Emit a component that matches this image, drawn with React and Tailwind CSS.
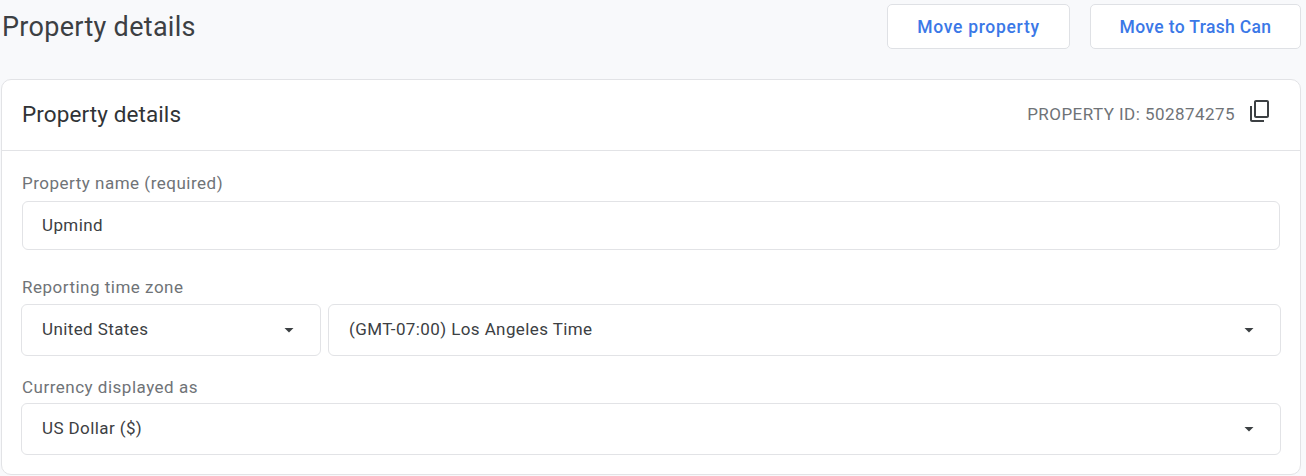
function Caret() {
  return (
    <svg width="10" height="5" viewBox="0 0 10 5" className="shrink-0">
      <path d="M0.5 0h9L5 4.500z" fill="#3c4043" />
    </svg>
  );
}

function Select({ text, className }) {
  return (
    <div className={`flex h-[52px] items-center justify-between rounded-[6px] border border-[#e2e3e6] bg-white pl-[20px] pr-[26px] text-[17px] tracking-[0.4px] text-[#3c4043] ${className}`}>
      <span>{text}</span>
      <Caret />
    </div>
  );
}

function Label({ children, className }) {
  return <div className={`text-[17px] leading-[20px] tracking-[0.5px] text-[#6f7377] ${className}`}>{children}</div>;
}

function Btn({ children, className }) {
  return (
    <div className={`flex h-[45px] items-center justify-center rounded-[5px] border border-[#dfe1e5] bg-white pt-[1px] text-[17.5px] font-medium text-[#3b78e7] ${className}`}>
      {children}
    </div>
  );
}

export default function App() {
  return (
    <div className="h-[476px] w-[1306px] overflow-hidden bg-[#f8f9fb] font-['Roboto','Liberation_Sans',sans-serif]">
      <div className="flex h-[79px] items-start justify-between pl-[2px] pr-[5px] pt-[4px]">
        <h1 className="mt-[4px] text-[27px] leading-[38px] tracking-[0.3px] text-[#3c4043]">Property details</h1>
        <div className="flex gap-[20px]">
          <Btn className="w-[183px] tracking-[0.7px]">Move property</Btn>
          <Btn className="w-[211px] tracking-[0.35px]">Move to Trash Can</Btn>
        </div>
      </div>
      <div className="ml-[1px] h-[396px] w-[1300px] rounded-[10px] border border-[#e2e3e6] bg-white">
        <div className="flex h-[71px] items-center justify-between border-b border-[#e2e3e6] pl-[20px] pr-[28px]">
          <h2 className="text-[22.5px] tracking-[0.1px] text-[#303336]">Property details</h2>
          <div className="flex items-center gap-[13px]">
            <span className="text-[17px] tracking-[0.45px] text-[#6f7377]">PROPERTY ID: 502874275</span>
            <svg width="24" height="24" viewBox="0 0 24 24" fill="#3c4043" className="-mt-[8px]">
              <path d="M16 1H4c-1.100 0-2 .9-2 2v14h2V3h12V1zm3 4H8c-1.100 0-2 .9-2 2v14c0 1.100.9 2 2 2h11c1.100 0 2-.9 2-2V7c0-1.100-.9-2-2-2zm0 16H8V7h11v14z" transform="matrix(1 0 0 -1 0 24)" />
            </svg>
          </div>
        </div>
        <div className="pl-[19px] pr-[19px]">
          <Label className="ml-[1px] mt-[22px]">Property name (required)</Label>
          <div className="ml-[1px] mt-[8px] flex h-[49px] w-[1258px] items-center rounded-[6px] border border-[#e2e3e6] pl-[19px] text-[17px] tracking-[0.4px] text-[#3c4043]">
            Upmind
          </div>
          <Label className="ml-[1px] mt-[27px]">Reporting time zone</Label>
          <div className="mt-[7px] flex w-[1260px] gap-[7px]">
            <Select text="United States" className="w-[300px]" />
            <Select text="(GMT-07:00) Los Angeles Time" className="flex-1" />
          </div>
          <Label className="ml-[1px] mt-[21px]">Currency displayed as</Label>
          <Select text="US Dollar ($)" className="mt-[6px] w-[1260px]" />
        </div>
      </div>
    </div>
  );
}
